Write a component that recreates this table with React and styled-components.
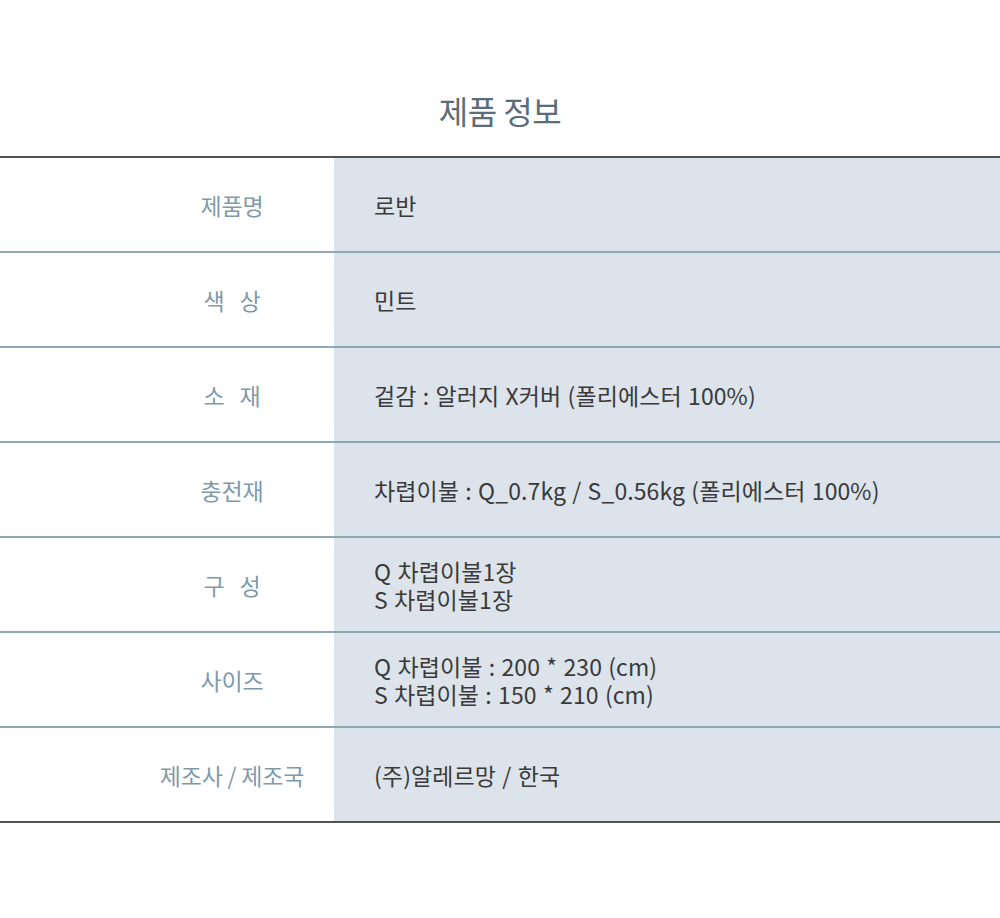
import React from "react";
import styled, { createGlobalStyle } from "styled-components";

const GlobalStyle = createGlobalStyle`
  html, body {
    margin: 0;
    padding: 0;
    background: #ffffff;
  }
  body {
    font-family: "Noto Sans CJK KR", "Noto Sans", sans-serif;
  }
`;

const rows = [
  { label: "제품명", value: ["로반"] },
  { label: "색\u00a0\u00a0\u00a0상", value: ["민트"] },
  { label: "소\u00a0\u00a0\u00a0재", value: ["겉감 : 알러지 X커버 (폴리에스터 100%)"] },
  { label: "충전재", value: ["차렵이불 : Q_0.7kg / S_0.56kg (폴리에스터 100%)"] },
  { label: "구\u00a0\u00a0\u00a0성", value: ["Q 차렵이불1장", "S 차렵이불1장"] },
  { label: "사이즈", value: ["Q 차렵이불 : 200 * 230 (cm)", "S 차렵이불 : 150 * 210 (cm)"] },
  { label: "제조사 / 제조국", value: ["(주)알레르망 / 한국"] },
];

const App = () => {
  return (
    <Page>
      <GlobalStyle />
      <Title>제품 정보</Title>
      <Table>
        {rows.map((row, i) => (
          <Row key={i} last={i === rows.length - 1}>
            <Label>{row.label}</Label>
            <Value>
              {row.value.map((line, j) => (
                <Line key={j}>{line}</Line>
              ))}
            </Value>
          </Row>
        ))}
      </Table>
    </Page>
  );
};

export default App;

const Page = styled.div`
  width: 1000px;
  height: 918px;
  padding-top: 88px;
  box-sizing: border-box;
`;

const Title = styled.h2`
  margin: 0 0 23px;
  text-align: center;
  font-size: 32px;
  font-weight: 400;
  line-height: 45px;
  color: #5b6d7a;
  letter-spacing: -0.5px;
`;

const Table = styled.div`
  border-top: 2px solid #505254;
`;

const Row = styled.div`
  display: grid;
  grid-template-columns: 334px 1fr;
  height: 95px;
  box-sizing: border-box;
  border-bottom: 2px solid ${({ last }) => (last ? "#505254" : "#8ea8b6")};
`;

const Label = styled.div`
  display: flex;
  align-items: center;
  justify-content: center;
  padding-left: 130px;
  font-size: 23px;
  color: #7f9aaa;
  white-space: nowrap;
  letter-spacing: -0.2px;
`;

const Value = styled.div`
  display: flex;
  flex-direction: column;
  justify-content: center;
  padding-left: 40px;
  background: #dce3ea;
  font-size: 23px;
  color: #3a3a3a;
`;

const Line = styled.div`
  line-height: 28px;
  letter-spacing: 0.1px;
  word-spacing: 1px;
  white-space: nowrap;
`;
